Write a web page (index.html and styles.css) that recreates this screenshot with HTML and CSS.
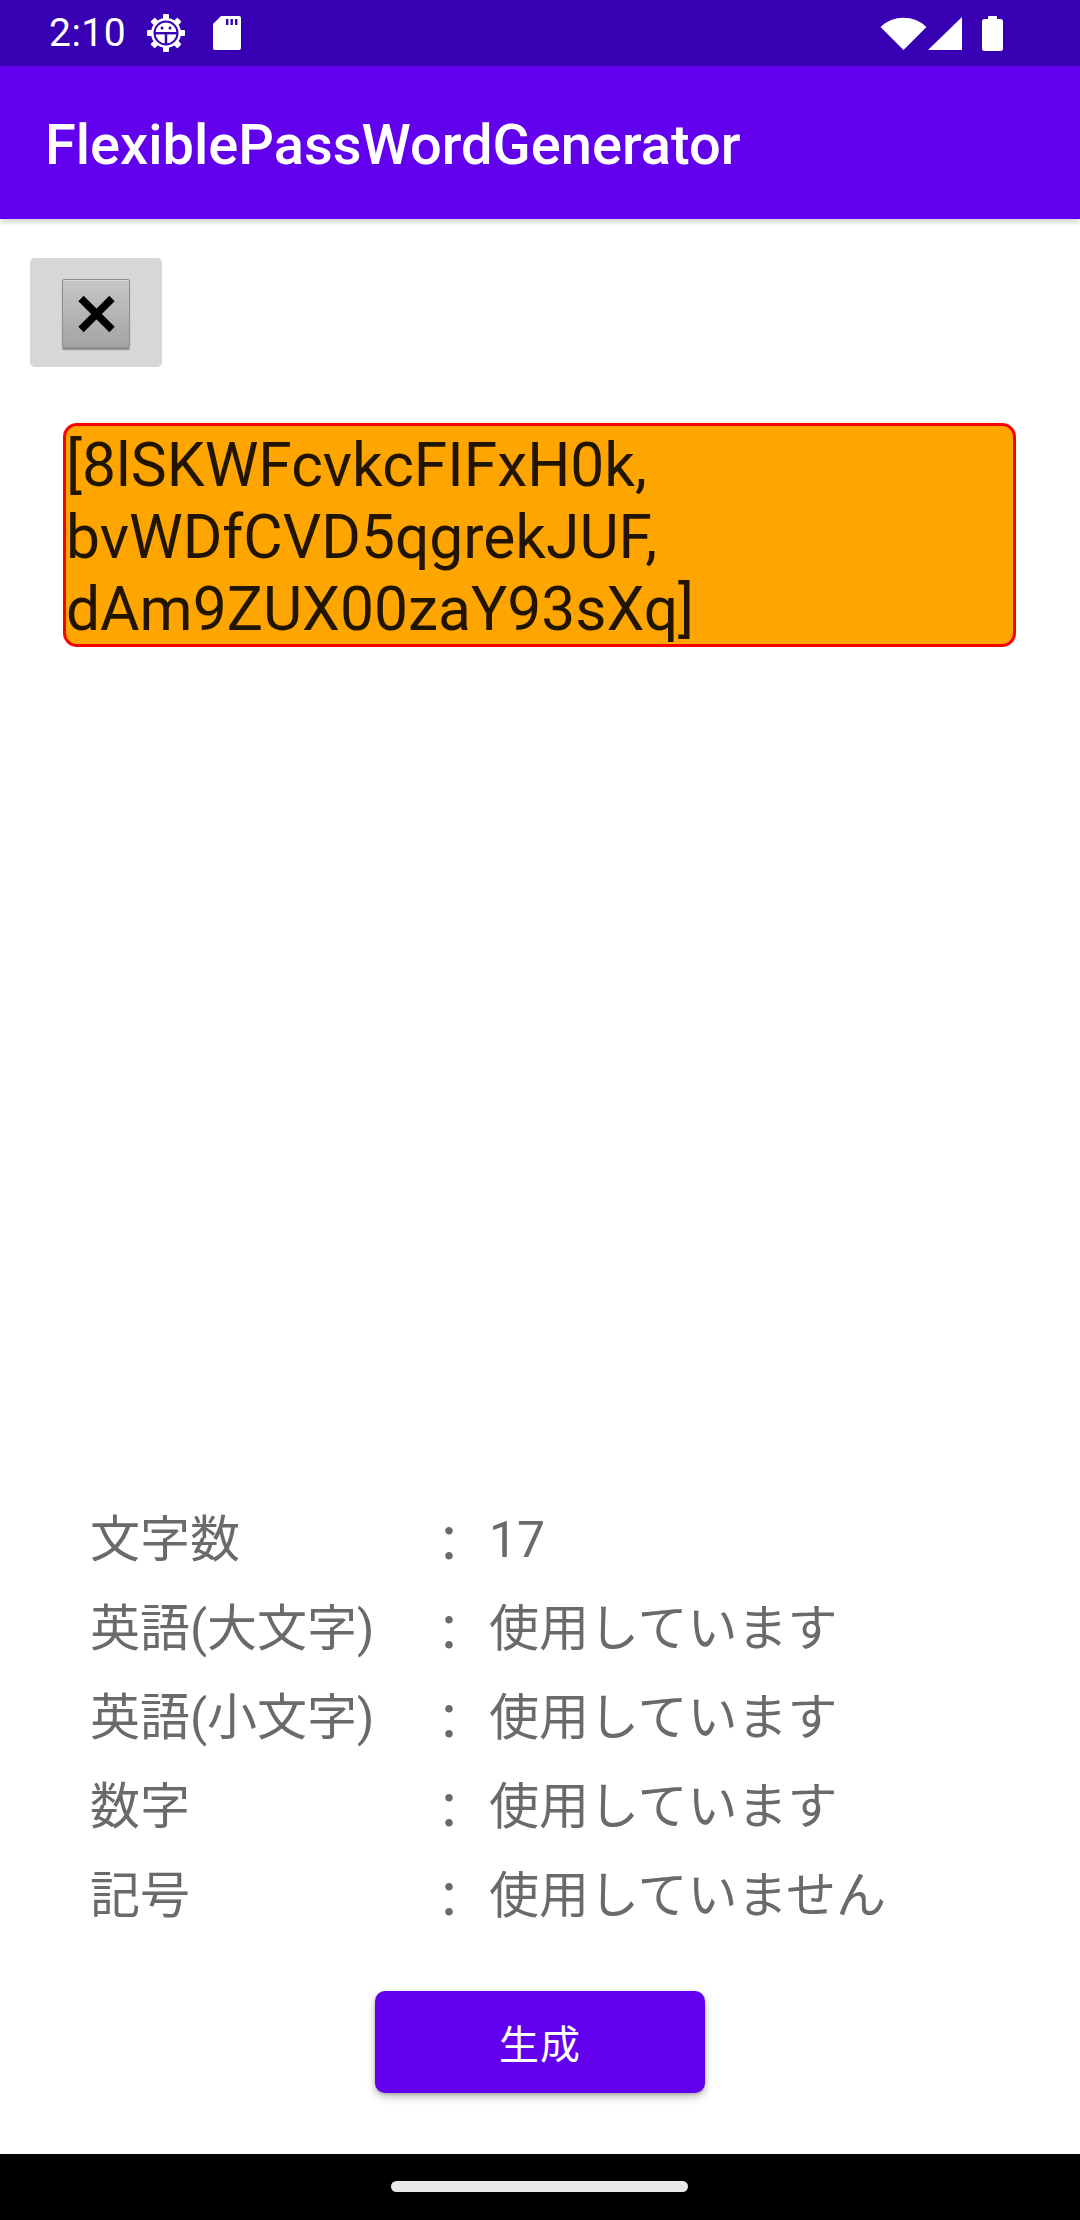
FILE: index.html
```html
<!DOCTYPE html>
<html lang="ja">
<head>
<meta charset="utf-8">
<title>FlexiblePassWordGenerator</title>
<link rel="stylesheet" href="styles.css">
</head>
<body>
<div class="screen">
  <div class="statusbar">
    <div class="sb-left">
      <span class="clock">2:10</span>
      <svg class="sb-gear" width="40" height="40" viewBox="0 0 40 40">
        <g fill="#fff">
          <circle cx="20" cy="20" r="15"/>
          <rect x="17" y="1" width="6" height="38" rx="1"/>
          <rect x="17" y="1" width="6" height="38" rx="1" transform="rotate(45 20 20)"/>
          <rect x="17" y="1" width="6" height="38" rx="1" transform="rotate(90 20 20)"/>
          <rect x="17" y="1" width="6" height="38" rx="1" transform="rotate(135 20 20)"/>
        </g>
        <circle cx="20" cy="20" r="11.5" fill="none" stroke="#3700B3" stroke-width="2"/>
        <circle cx="20" cy="20" r="9.5" fill="#fff"/>
        <rect x="8" y="19" width="24" height="2.4" fill="#3700B3"/>
        <rect x="18.8" y="20" width="2.4" height="12" fill="#3700B3"/>
        <circle cx="16" cy="15" r="1.5" fill="#3700B3"/>
        <circle cx="24" cy="15" r="1.5" fill="#3700B3"/>
      </svg>
      <svg class="sb-sd" width="28" height="34" viewBox="0 0 28 34">
        <path d="M8 0 H26 Q28 0 28 2 V32 Q28 34 26 34 H2 Q0 34 0 32 V8 Z" fill="#fff"/>
        <rect x="13" y="3" width="2.4" height="6" fill="#3700B3"/>
        <rect x="17.5" y="3" width="2.4" height="6" fill="#3700B3"/>
        <rect x="22" y="3" width="2.4" height="6" fill="#3700B3"/>
      </svg>
    </div>
    <div class="sb-right">
      <svg width="125" height="40" viewBox="880 12 125 40">
        <path d="M903.5 49 L880.5 26 A33 33 0 0 1 926.5 26 Z" fill="#fff"/>
        <path d="M928 49 L962 16 L962 49 Z" fill="#fff"/>
        <rect x="988" y="15" width="9" height="5" rx="1" fill="#fff"/>
        <rect x="982" y="18" width="21" height="32" rx="2.5" fill="#fff"/>
      </svg>
    </div>
  </div>

  <header class="appbar">
    <h1 class="title">FlexiblePassWordGenerator</h1>
  </header>

  <main class="content">
    <button class="close-btn" type="button" aria-label="クリア">
      <span class="close-icon">
        <svg width="68" height="69" viewBox="0 0 68 69">
          <path d="M19 19.5 L50 50.5 M50 19.5 L19 50.5" stroke="#000" stroke-width="7.5" stroke-linecap="butt"/>
        </svg>
      </span>
    </button>

    <div class="result">[8lSKWFcvkcFIFxH0k,<br>bvWDfCVD5qgrekJUF,<br>dAm9ZUX00zaY93sXq]</div>

    <div class="info">
      <div class="row"><span class="label">文字数</span><span class="colon">：</span><span class="value">17</span></div>
      <div class="row"><span class="label">英語(大文字)</span><span class="colon">：</span><span class="value">使用しています</span></div>
      <div class="row"><span class="label">英語(小文字)</span><span class="colon">：</span><span class="value">使用しています</span></div>
      <div class="row"><span class="label">数字</span><span class="colon">：</span><span class="value">使用しています</span></div>
      <div class="row"><span class="label">記号</span><span class="colon">：</span><span class="value">使用していません</span></div>
    </div>

    <div class="actions">
      <button class="gen-btn" type="button">生成</button>
    </div>
  </main>

  <div class="navbar">
    <div class="home-pill"></div>
  </div>
</div>
</body>
</html>
```

FILE: styles.css
```css
html, body {
  margin: 0;
  padding: 0;
  background: #ffffff;
}

.screen {
  width: 1080px;
  height: 2220px;
  display: flex;
  flex-direction: column;
  overflow: hidden;
  font-family: Roboto, "Noto Sans CJK JP", sans-serif;
}

.statusbar {
  height: 66px;
  flex: 0 0 66px;
  background: #3700B3;
  display: flex;
  justify-content: space-between;
  align-items: center;
  color: #fff;
}

.sb-left {
  display: flex;
  align-items: center;
  padding-left: 49px;
  height: 66px;
}

.clock {
  font-family: Roboto, sans-serif;
  font-size: 39px;
  line-height: 66px;
  letter-spacing: 0.5px;
}

.sb-gear {
  margin-left: 20px;
  margin-top: -1px;
}

.sb-sd {
  margin-left: 27px;
}

.sb-right {
  display: flex;
  align-items: center;
  padding-right: 75px;
}

.appbar {
  height: 153px;
  flex: 0 0 153px;
  background: #6200EE;
  box-shadow: 0 3px 6px rgba(0, 0, 0, 0.18);
  position: relative;
  z-index: 1;
}

.title {
  margin: 0;
  padding: 8px 0 0 45px;
  font-family: Roboto, sans-serif;
  font-weight: 500;
  font-size: 56px;
  line-height: 142px;
  color: #ffffff;
  letter-spacing: 0;
}

.content {
  flex: 1 1 auto;
  display: flex;
  flex-direction: column;
  align-items: flex-start;
}

.close-btn {
  margin: 39px 0 0 30px;
  width: 132px;
  height: 109px;
  padding: 0;
  border: none;
  border-radius: 5px;
  background: #d6d7d7;
  display: flex;
  align-items: center;
  justify-content: center;
}

.close-icon {
  display: block;
  width: 68px;
  height: 69px;
  margin-top: 2px;
  box-sizing: border-box;
  border: 1px solid #8e8e8e;
  border-radius: 2px;
  background: linear-gradient(#c6c6c6, #a4a4a4);
  box-shadow: 0 2px 1px rgba(0, 0, 0, 0.35), inset 0 1px 0 rgba(255,255,255,0.35);
}

.close-icon svg {
  display: block;
  margin: -1px;
}

.result {
  margin: 56px 0 0 63px;
  width: 953px;
  height: 224px;
  box-sizing: border-box;
  padding: 4px 0 0 0;
  border: 3px solid #ff0000;
  border-radius: 14px;
  background: #ffa500;
  color: rgba(0, 0, 0, 0.87);
  font-family: Roboto, sans-serif;
  font-size: 60.5px;
  line-height: 72px;
}

.info {
  margin-top: auto;
  margin-left: 90px;
  color: #6a6a6a;
  font-family: Roboto, "Noto Sans CJK JP", sans-serif;
  font-size: 50px;
}

.row {
  display: grid;
  grid-template-columns: 334px 50px auto;
  height: 89px;
  line-height: 89px;
}

.colon {
  text-align: center;
  font-family: "Noto Sans CJK JP", sans-serif;
}

.value {
  padding-left: 15px;
}

.actions {
  align-self: stretch;
  display: flex;
  justify-content: center;
  margin-top: 50px;
  margin-bottom: 61px;
}

.gen-btn {
  width: 330px;
  height: 102px;
  border: none;
  border-radius: 10px;
  background: #6200EE;
  color: #ffffff;
  font-family: "Noto Sans CJK JP", sans-serif;
  font-weight: 400;
  font-size: 40px;
  letter-spacing: 1px;
  box-shadow: 0 4px 8px rgba(0, 0, 0, 0.25), 0 1px 3px rgba(0, 0, 0, 0.2);
}

.navbar {
  height: 66px;
  flex: 0 0 66px;
  background: #000000;
  display: flex;
  justify-content: center;
}

.home-pill {
  width: 297px;
  height: 11px;
  margin-top: 27px;
  margin-left: -1px;
  border-radius: 6px;
  background: #e8e8e8;
}
```
